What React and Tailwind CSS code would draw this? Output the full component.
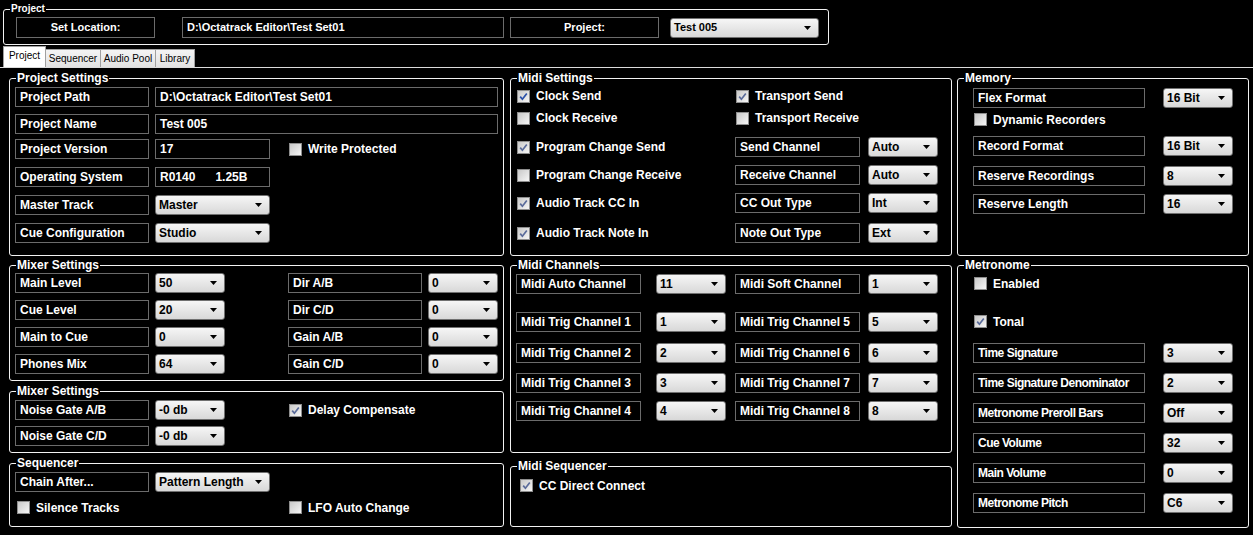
import { Fragment } from "react"

function Group({ title, className, children, legendClass = "text-[12px]" }) {
  return (
    <fieldset className={`rounded-[3px] border border-[#f2f2f2] ${className}`}>
      <legend className={`ml-[6px] px-[1px] font-bold leading-[12px] text-white ${legendClass}`}>{title}</legend>
      {children}
    </fieldset>
  )
}

function Box({ children, className = "" }) {
  return (
    <div className={`flex h-[20px] shrink-0 items-center whitespace-nowrap border border-[#6b6b6b] px-[4px] font-bold text-white ${className}`}>
      {children}
    </div>
  )
}

function Select({ value, className = "" }) {
  return (
    <div
      className={`flex h-[20px] shrink-0 items-center justify-between rounded-[3px] border border-[#707070] bg-linear-to-b from-[#f6f6f6] to-[#d8d8d8] pl-[3px] pr-[7px] font-bold text-black ${className}`}
    >
      <span>{value}</span>
      <svg width="7" height="4" viewBox="0 0 7 4">
        <path d="M0 0h7L3.5 4z" fill="#000" />
      </svg>
    </div>
  )
}

function Check({ label, checked, focus, className = "" }) {
  return (
    <div className={`flex h-[13px] shrink-0 items-center gap-[6px] ${className}`}>
      <span className="flex h-[13px] w-[13px] items-center justify-center border border-[#8e8e8e] bg-linear-to-br from-[#c9c9c9] to-[#f6f6f6]">
        {checked && (
          <svg width="9" height="9" viewBox="0 0 9 9">
            <path
              d="M1.2 4.6 L3.4 7.2 L7.8 1.4"
              fill="none"
              stroke={focus ? "#2a50a8" : "#5a6b9a"}
              strokeWidth="1.7"
            />
          </svg>
        )}
      </span>
      <span className="whitespace-nowrap text-[12px] font-bold text-white">{label}</span>
    </div>
  )
}

const midiRows = [
  ["Midi Auto Channel", "11", "Midi Soft Channel", "1", "mt-[3px]"],
  ["Midi Trig Channel 1", "1", "Midi Trig Channel 5", "5", "mt-[18px]"],
  ["Midi Trig Channel 2", "2", "Midi Trig Channel 6", "6", "mt-[11px]"],
  ["Midi Trig Channel 3", "3", "Midi Trig Channel 7", "7", "mt-[10px]"],
  ["Midi Trig Channel 4", "4", "Midi Trig Channel 8", "8", "mt-[8px]"],
]

const metroRows = [
  ["Time Signature", "3", "mt-[15px]"],
  ["Time Signature Denominator", "2", "mt-[10px]"],
  ["Metronome Preroll Bars", "Off", "mt-[10px]"],
  ["Cue Volume", "32", "mt-[10px]"],
  ["Main Volume", "0", "mt-[10px]"],
  ["Metronome Pitch", "C6", "mt-[10px]"],
]

export default function App() {
  return (
    <div className="h-[535px] w-[1253px] overflow-hidden bg-black pt-[1px] text-[12px] font-['Liberation_Sans',Arial,sans-serif]">
      {/* top project bar */}
      <Group title="Project" legendClass="text-[10px]" className="ml-[3px] mt-[2px] h-[42px] w-[826px]">
        <div className="mt-[2px] flex items-center text-[11px]">
          <div className="ml-[12px] flex h-[21px] w-[139px] items-center justify-center border border-[#6b6b6b] font-bold text-white">
            Set Location:
          </div>
          <div className="ml-[27px] flex h-[21px] w-[322px] items-center border border-[#6b6b6b] px-[4px] font-bold text-white">
            D:\Octatrack Editor\Test Set01
          </div>
          <div className="ml-[6px] flex h-[21px] w-[149px] items-center justify-center border border-[#6b6b6b] font-bold text-white">
            Project:
          </div>
          <Select value="Test 005" className="ml-[11px] w-[149px]" />
        </div>
      </Group>

      {/* tabs */}
      <div className="mt-[1px] flex h-[21px] items-end pl-[3px] text-[10px] text-black">
        <div className="flex h-[21px] w-[43px] items-center justify-center border border-b-0 border-[#a0a0a0] bg-white pb-[3px]">
          Project
        </div>
        <div className="flex h-[18px] w-[55px] items-center justify-center border border-b-0 border-l-0 border-[#a0a0a0] bg-linear-to-b from-[#f4f4f4] to-[#e2e2e2]">
          Sequencer
        </div>
        <div className="flex h-[18px] w-[55px] items-center justify-center border border-b-0 border-l-0 border-[#a0a0a0] bg-linear-to-b from-[#f4f4f4] to-[#e2e2e2]">
          Audio Pool
        </div>
        <div className="flex h-[18px] w-[39px] items-center justify-center border border-b-0 border-l-0 border-[#a0a0a0] bg-linear-to-b from-[#f4f4f4] to-[#e2e2e2]">
          Library
        </div>
      </div>
      <div className="h-[1px] w-full bg-[#dcdcdc]" />

      <div className="mt-[4px] flex pl-[9px]">
        {/* left column */}
        <div className="flex w-[495px] flex-col">
          <Group title="Project Settings" className="h-[184px]">
            <div className="ml-[5px] mt-[3px] flex">
              <Box className="w-[134px]">Project Path</Box>
              <Box className="ml-[6px] w-[343px]">D:\Octatrack Editor\Test Set01</Box>
            </div>
            <div className="ml-[5px] mt-[7px] flex">
              <Box className="w-[134px]">Project Name</Box>
              <Box className="ml-[6px] w-[343px]">Test 005</Box>
            </div>
            <div className="ml-[5px] mt-[5px] flex items-center">
              <Box className="w-[134px]">Project Version</Box>
              <Box className="ml-[6px] w-[115px]">17</Box>
              <Check label="Write Protected" className="ml-[19px]" />
            </div>
            <div className="ml-[5px] mt-[8px] flex">
              <Box className="w-[134px]">Operating System</Box>
              <Box className="ml-[6px] w-[115px]">
                <span>R0140</span>
                <span className="ml-[20px]">1.25B</span>
              </Box>
            </div>
            <div className="ml-[5px] mt-[8px] flex">
              <Box className="w-[134px]">Master Track</Box>
              <Select value="Master" className="ml-[6px] w-[115px]" />
            </div>
            <div className="ml-[5px] mt-[8px] flex">
              <Box className="w-[134px]">Cue Configuration</Box>
              <Select value="Studio" className="ml-[6px] w-[115px]" />
            </div>
          </Group>

          <Group title="Mixer Settings" className="mt-[3px] h-[122px]">
            {[
              ["Main Level", "50", "Dir A/B", "0", "mt-[2px]"],
              ["Cue Level", "20", "Dir C/D", "0", "mt-[7px]"],
              ["Main to Cue", "0", "Gain A/B", "0", "mt-[7px]"],
              ["Phones Mix", "64", "Gain C/D", "0", "mt-[7px]"],
            ].map(([a, av, b, bv, mt]) => (
              <div key={a} className={`ml-[5px] flex ${mt}`}>
                <Box className="w-[134px]">{a}</Box>
                <Select value={av} className="ml-[6px] w-[70px]" />
                <Box className="ml-[63px] w-[134px]">{b}</Box>
                <Select value={bv} className="ml-[6px] w-[70px]" />
              </div>
            ))}
          </Group>

          <Group title="Mixer Settings" className="mt-[4px] h-[68px]">
            <div className="ml-[5px] mt-[3px] flex items-center">
              <Box className="w-[134px]">Noise Gate A/B</Box>
              <Select value="-0 db" className="ml-[6px] w-[70px]" />
              <Check label="Delay Compensate" checked className="ml-[64px]" />
            </div>
            <div className="ml-[5px] mt-[6px] flex">
              <Box className="w-[134px]">Noise Gate C/D</Box>
              <Select value="-0 db" className="ml-[6px] w-[70px]" />
            </div>
          </Group>

          <Group title="Sequencer" className="mt-[4px] h-[70px]">
            <div className="ml-[5px] mt-[3px] flex">
              <Box className="w-[134px]">Chain After...</Box>
              <Select value="Pattern Length" className="ml-[6px] w-[115px]" />
            </div>
            <div className="ml-[7px] mt-[9px] flex">
              <Check label="Silence Tracks" className="w-[272px]" />
              <Check label="LFO Auto Change" />
            </div>
          </Group>
        </div>

        {/* middle column */}
        <div className="ml-[6px] flex w-[442px] flex-col">
          <Group title="Midi Settings" className="h-[184px]">
            <div className="ml-[6px] mt-[2px] flex h-[20px] items-center">
              <Check label="Clock Send" checked focus className="w-[219px]" />
              <Check label="Transport Send" checked />
            </div>
            <div className="ml-[6px] mt-[2px] flex h-[20px] items-center">
              <Check label="Clock Receive" className="w-[219px]" />
              <Check label="Transport Receive" />
            </div>
            {[
              ["Program Change Send", true, "Send Channel", "Auto", "mt-[9px]"],
              ["Program Change Receive", false, "Receive Channel", "Auto", "mt-[8px]"],
              ["Audio Track CC In", true, "CC Out Type", "Int", "mt-[8px]"],
              ["Audio Track Note In", true, "Note Out Type", "Ext", "mt-[10px]"],
            ].map(([l, c, b, v, mt]) => (
              <div key={l} className={`ml-[6px] flex h-[20px] items-center ${mt}`}>
                <Check label={l} checked={c} className="w-[218px]" />
                <Box className="w-[125px]">{b}</Box>
                <Select value={v} className="ml-[8px] w-[70px]" />
              </div>
            ))}
          </Group>

          <Group title="Midi Channels" className="mt-[3px] h-[194px]">
            {midiRows.map(([a, av, b, bv, mt]) => (
              <div key={a} className={`ml-[5px] flex ${mt}`}>
                <Box className="w-[125px]">{a}</Box>
                <Select value={av} className="ml-[15px] w-[70px]" />
                <Box className="ml-[9px] w-[125px]">{b}</Box>
                <Select value={bv} className="ml-[8px] w-[70px]" />
              </div>
            ))}
          </Group>

          <Group title="Midi Sequencer" className="mt-[7px] h-[67px]">
            <Check label="CC Direct Connect" checked className="ml-[9px] mt-[7px]" />
          </Group>
        </div>

        {/* right column */}
        <div className="ml-[5px] flex w-[292px] flex-col">
          <Group title="Memory" className="h-[184px]">
            <div className="ml-[15px] mt-[4px] flex">
              <Box className="w-[172px]">Flex Format</Box>
              <Select value="16 Bit" className="ml-[18px] w-[70px]" />
            </div>
            <Check label="Dynamic Recorders" className="ml-[16px] mt-[5px]" />
            {[
              ["Record Format", "16 Bit", "mt-[10px]"],
              ["Reserve Recordings", "8", "mt-[10px]"],
              ["Reserve Length", "16", "mt-[8px]"],
            ].map(([l, v, mt]) => (
              <div key={l} className={`ml-[15px] flex ${mt}`}>
                <Box className="w-[172px]">{l}</Box>
                <Select value={v} className="ml-[18px] w-[70px]" />
              </div>
            ))}
          </Group>

          <Group title="Metronome" className="mt-[3px] h-[269px]">
            <Check label="Enabled" className="ml-[16px] mt-[6px]" />
            <Check label="Tonal" checked className="ml-[16px] mt-[25px]" />
            {metroRows.map(([l, v, mt]) => (
              <Fragment key={l}>
                <div className={`ml-[15px] flex ${mt}`}>
                  <Box className="w-[172px] tracking-[-0.5px]">{l}</Box>
                  <Select value={v} className="ml-[18px] w-[70px]" />
                </div>
              </Fragment>
            ))}
          </Group>
        </div>
      </div>
    </div>
  )
}
